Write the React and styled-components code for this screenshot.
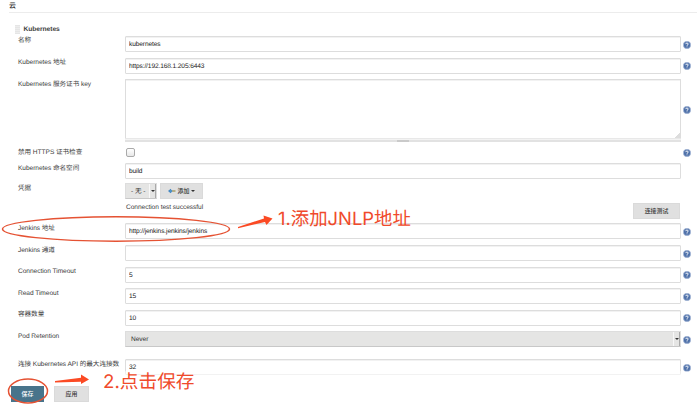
import React from "react";
import styled, { createGlobalStyle } from "styled-components";

const Global = createGlobalStyle`
  * { box-sizing: border-box; }
  body { margin: 0; background: #fff; overflow: hidden; }
`;
const Page = styled.main`
  position: relative;
  width: 697px;
  height: 404px;
  overflow: hidden;
  color: #404040;
  font: 6.6px/9px "Liberation Sans", "Noto Sans CJK SC", sans-serif;
  letter-spacing: -0.05px;
  text-rendering: geometricPrecision;
`;
const Heading = styled.h1`
  margin: 0 0 0 9px;
  height: 13px;
  border-bottom: 1px solid #ececec;
  font-size: 7px;
  line-height: 14px;
  font-weight: 500;
  color: #333;
`;
const CloudTitle = styled.div`
  display: flex;
  align-items: center;
  height: 9px;
  margin: 12px 0 2px 15px;
  gap: 3.5px;
  font-weight: 700;
  font-size: 6.7px;
`;
const Handle = styled.span`
  width: 5px;
  height: 9px;
  background: repeating-linear-gradient(#e5e5e5 0 1px, #ededed 1px 2px);
`;
const Row = styled.div`
  display: grid;
  grid-template-columns: 107px 556px 14px;
  height: ${(p) => p.$h}px;
  margin-left: 18px;
  align-items: start;
`;
const Label = styled.label`
  white-space: nowrap;
  padding-top: ${(p) => (p.$drop === undefined ? 0.5 : p.$drop)}px;
`;
const Field = styled.input`
  width: 100%;
  height: 16px;
  padding: 1px 3px 0;
  border: 1px solid #ddd;
  border-radius: 1px;
  box-shadow: inset 0 1px 0 #f2f2f2;
  outline: none;
  background: #fff;
  color: #222;
  font: inherit;
  letter-spacing: -0.12px;
  text-rendering: inherit;
`;
const AreaWrap = styled.div`
  display: flex;
  flex-direction: column;
  height: 63px;
`;
const Area = styled.textarea`
  height: 60px;
  border: 1px solid #ddd;
  border-bottom-color: #e8e8e8;
  border-radius: 1px;
  box-shadow: inset 0 1px 0 #f2f2f2;
  resize: none;
  outline: none;
  background: linear-gradient(135deg, transparent 50%, #ddd 50%) right bottom / 5px 5px no-repeat #fff;
`;
const Grip = styled.div`
  display: flex;
  justify-content: center;
  height: 3px;
  border-top: 1px solid #f3f3f3;
  background: #e2e2e2;
  &::after { content: ""; width: 12px; height: 2px; background: #cacaca; }
`;
const HelpIcon = styled.svg`
  width: 8px;
  height: 8px;
  margin: ${(p) => p.$top}px 0 0 1.5px;
`;
const Check = styled.span`
  width: 9px;
  height: 9px;
  margin-left: 1px;
  border: 1px solid #aaa;
  border-radius: 2px;
  background: linear-gradient(#fff, #e8e8e8);
`;
const Choices = styled.div`
  display: flex;
  gap: 3px;
`;
const Picker = styled.div`
  display: flex;
  justify-content: space-between;
  align-items: center;
  width: ${(p) => p.$w};
  height: 16px;
  padding-left: 5px;
  border: 1px solid #ddd;
  border-bottom-color: #c8c8c8;
  background: #e5e5e4;
  color: #333;
`;
const Drop = styled.span`
  display: flex;
  flex: none;
  align-items: center;
  justify-content: center;
  width: 7px;
  height: 14px;
  border-left: 1px solid #f8f8f8;
  border-right: 1px solid #aaa;
`;
const Caret = styled.i`
  border: 2px solid transparent;
  border-top-color: #333;
  border-bottom: 0;
`;
const Button = styled.button`
  display: flex;
  align-items: center;
  justify-content: center;
  gap: 2px;
  width: ${(p) => p.$w}px;
  height: 16px;
  padding: 0;
  border: 1px solid ${(p) => (p.$primary ? "#48748b" : "#dadada")};
  background: ${(p) => (p.$primary ? "#48748b" : "#e0e0e0")};
  color: ${(p) => (p.$primary ? "#fff" : "#333")};
  font: 500 5.9px/8px "Liberation Sans", "Noto Sans CJK SC", sans-serif;
`;
const Status = styled.div`
  display: flex;
  justify-content: space-between;
  height: 20px;
  margin: 0 17px 0 126px;
  line-height: 10px;
`;
const Footer = styled.footer`
  position: absolute;
  left: 9px;
  right: 0;
  bottom: 0;
  height: 33px;
  display: flex;
  align-items: flex-end;
  gap: 10px;
  padding: 0 0 2px 2px;
  background: linear-gradient(rgba(255,255,255,.4), rgba(255,255,255,.9) 8px);
`;
const Marks = styled.svg`
  position: absolute;
  inset: 0;
  pointer-events: none;
`;
const Note = styled.div`
  position: absolute;
  left: ${(p) => p.$x}px;
  top: ${(p) => p.$y}px;
  color: #f04a2b;
  font: ${(p) => p.$size}px/24px Inter, "Noto Sans CJK SC", sans-serif;
  letter-spacing: 0;
  white-space: nowrap;
`;

const Help = ({ top = 4.5 }) => (
  <HelpIcon $top={top} viewBox="0 0 8 8">
    <circle cx="4" cy="4" r="3.7" fill="#4f71a9" stroke="#b5c5df" strokeWidth=".6" />
    <path d="M2.7 3.1Q2.8 2 4 2T5.2 3.1Q5.1 3.8 4 4.3V4.8M4 5.5v.8" fill="none" stroke="#fff" strokeWidth=".9" />
  </HelpIcon>
);
const TextRow = ({ label, value, h, drop }) => (
  <Row $h={h}>
    <Label $drop={drop}>{label}</Label>
    <Field defaultValue={value} aria-label={label} />
    <Help />
  </Row>
);

export default function App() {
  return (
    <Page>
      <Global />
      <Heading>云</Heading>
      <CloudTitle><Handle />Kubernetes</CloudTitle>
      <TextRow label="名称" value="kubernetes" h={21.5} drop={0} />
      <TextRow label="Kubernetes 地址" value="https://192.168.1.205:6443" h={21.5} />
      <Row $h={69}>
        <Label>Kubernetes 服务证书 key</Label>
        <AreaWrap><Area aria-label="Kubernetes 服务证书 key" /><Grip /></AreaWrap>
        <Help top={27} />
      </Row>
      <Row $h={15}><Label $drop={0}>禁用 HTTPS 证书检查</Label><Check /><Help top={1} /></Row>
      <Row $h={20}><Label>Kubernetes 命名空间</Label><Field defaultValue="build" aria-label="Kubernetes 命名空间" /></Row>
      <Row $h={20}>
        <Label>凭据</Label>
        <Choices>
          <Picker $w="32px">- 无 -<Drop><Caret /></Drop></Picker>
          <Button $w={43}>
            <svg width="8" height="6" viewBox="0 0 8 6">
              <path d="M2 3h5.5" stroke="#a29a61" strokeWidth="1.4" />
              <path d="M0 3L3 .8V5.200Z" fill="#3478b8" />
              <circle cx="2.700" cy="3" r="1.5" fill="#4d91c9" />
            </svg>
            添加 <Caret />
          </Button>
        </Choices>
      </Row>
      <Status>Connection test successful<Button $w={47}>连接测试</Button></Status>
      <TextRow label="Jenkins 地址" value="http://jenkins.jenkins/jenkins" h={22} />
      <TextRow label="Jenkins 通道" value="" h={21.5} />
      <TextRow label="Connection Timeout" value="5" h={21.5} />
      <TextRow label="Read Timeout" value="15" h={21.5} />
      <TextRow label="容器数量" value="10" h={21.5} />
      <Row $h={28}>
        <Label>Pod Retention</Label>
        <Picker $w="100%">Never<Drop><Caret /></Drop></Picker>
        <Help />
      </Row>
      <TextRow label="连接 Kubernetes API 的最大连接数" value="32" h={20} />
      <Footer><Button $primary $w={33}>保存</Button><Button $w={35}>应用</Button></Footer>
      <Marks width="697" height="404" fill="none" stroke="#e55233" strokeWidth="1.5">
        <ellipse cx="116" cy="229" rx="113.5" ry="12.2" />
        <ellipse cx="28" cy="391" rx="19.5" ry="12" />
        <g fill="#fb4a24" stroke="none">
          <path d="M238 227L264 218.500L263.500 215.500L272.500 218.500L266.500 225L265 222L238 228.300Z" />
          <path d="M55 381L81 377.700L81 374.500L89 379.500L81 384L81 381.700L55 382.500Z" />
        </g>
      </Marks>
      <Note $x={278} $y={207} $size={18.4}>1.添加JNLP地址</Note>
      <Note $x={103} $y={370} $size={18.7}>2.点击保存</Note>
    </Page>
  );
}
